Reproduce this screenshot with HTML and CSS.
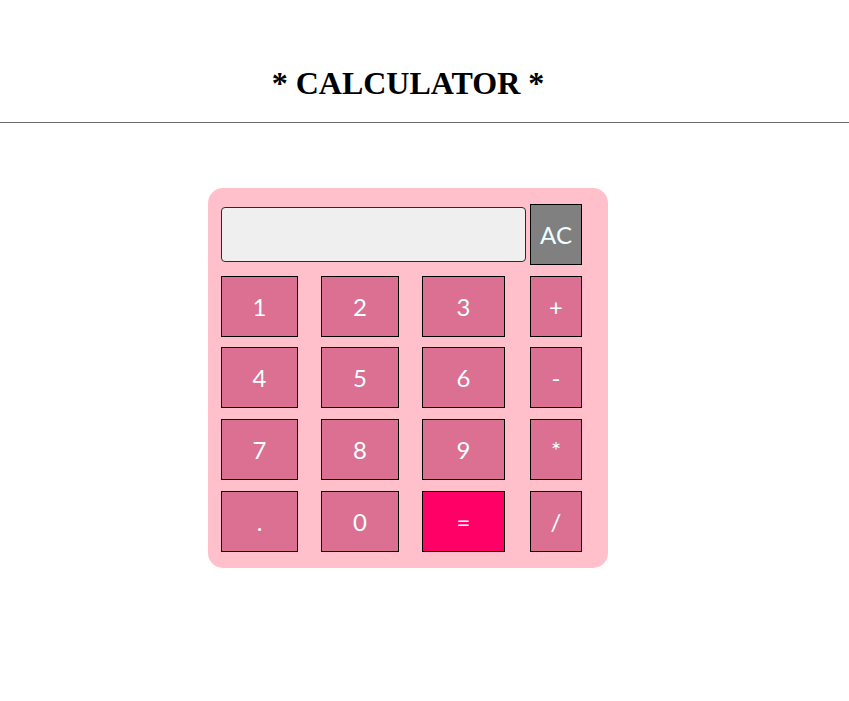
FILE: index.html
```html
<!DOCTYPE html>
<html>
<head>
<meta charset="utf-8">
<title>Calculator</title>
<link rel="stylesheet" href="styles.css">
</head>
<body>
<header class="header">
  <div class="header-inner">
    <h1 class="title">* CALCULATOR *</h1>
  </div>
</header>
<main class="stage">
  <div class="calc">
    <input class="display" type="text" value="">
    <button class="key key-ac">AC</button>
    <button class="key">1</button>
    <button class="key">2</button>
    <button class="key">3</button>
    <button class="key">+</button>
    <button class="key">4</button>
    <button class="key">5</button>
    <button class="key">6</button>
    <button class="key">-</button>
    <button class="key">7</button>
    <button class="key">8</button>
    <button class="key">9</button>
    <button class="key">*</button>
    <button class="key">.</button>
    <button class="key">0</button>
    <button class="key key-eq">=</button>
    <button class="key">/</button>
  </div>
</main>
</body>
</html>
```

FILE: styles.css
```css
html, body {
  margin: 0;
  padding: 0;
  background: #ffffff;
}

.header {
  border-bottom: 1px solid #6b6b6b;
}

.header-inner {
  width: 800px;
  margin-left: 8px;
  padding-top: 63px;
  padding-bottom: 19px;
  text-align: center;
}

.title {
  margin: 0;
  font-family: "Liberation Serif", "Times New Roman", serif;
  font-size: 32px;
  font-weight: bold;
  line-height: 40px;
  color: #000;
}

.stage {
  width: 800px;
  margin-left: 8px;
  padding-top: 65px;
  display: flex;
  justify-content: center;
}

.calc {
  width: 400px;
  box-sizing: border-box;
  padding: 16px 26px 16px 13px;
  background: #ffc0cb;
  border-radius: 15px;
  display: grid;
  grid-template-columns: 100px 101px 108px 52px;
  grid-template-rows: repeat(5, 61px);
  row-gap: 10.67px;
}

.display {
  grid-column: 1 / 4;
  align-self: center;
  height: 55px;
  width: 305px;
  box-sizing: border-box;
  margin: 0;
  border: 1px solid #2b2b2b;
  border-radius: 4px;
  background: #efefef;
  padding: 0 8px;
  outline: none;
}

.key {
  margin: 0;
  padding: 0;
  height: 61px;
  box-sizing: border-box;
  border: 1px solid #000;
  border-radius: 0;
  background: #db7093;
  color: #f0ffff;
  font-family: "Lato", "Open Sans", sans-serif;
  font-size: 24px;
  cursor: pointer;
  justify-self: start;
}

.calc > .key:nth-child(4n+3) { width: 77px; }
.calc > .key:nth-child(4n+4) { width: 78px; }
.calc > .key:nth-child(4n+5) { width: 83px; }
.calc > .key:nth-child(4n+6) { width: 52px; }

.key-ac {
  width: 52px;
  background: #808080;
}

.key-eq {
  background: #ff0066;
}
```
